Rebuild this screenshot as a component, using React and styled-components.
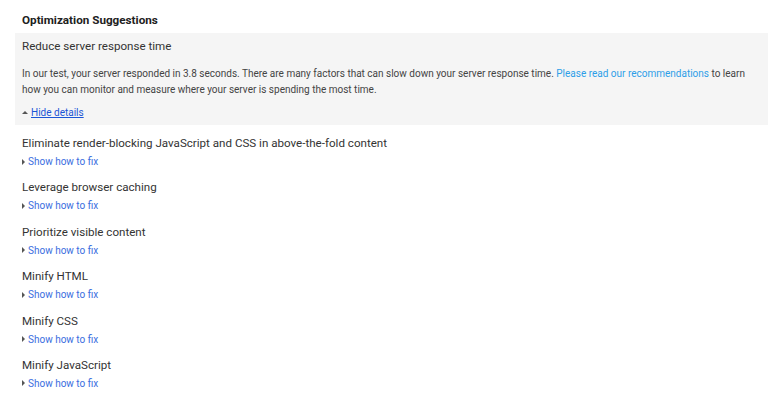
import React from 'react'
import styled, { createGlobalStyle } from 'styled-components'

const Global = createGlobalStyle`
  body {
    margin: 0;
    background: #fff;
    font-family: Roboto, "Liberation Sans", sans-serif;
    color: #333;
  }
`

const Page = styled.div`
  padding: 0 0 0 15px;
`

const Heading = styled.h2`
  margin: 0;
  padding: 12px 7px 0;
  height: 21px;
  font-size: 11.7px;
  line-height: 16px;
  font-weight: 700;
  color: #212121;
`

const Block = styled.div`
  background: ${p => (p.open ? '#f5f5f5' : 'transparent')};
  padding: ${p => (p.open ? '4px 7px 3px' : '2px 7px 3px')};
`

const RuleTitle = styled.div`
  font-size: 11.6px;
  line-height: 18px;
  color: #333;
`

const Body = styled.p`
  margin: 11px 0 5px;
  font-size: 10px;
  line-height: 16px;
  color: #444;

  a {
    color: #2d9ee8;
    text-decoration: none;
  }
`

const Toggle = styled.a`
  display: flex;
  align-items: center;
  gap: 2px;
  height: 19px;
  font-size: 10px;
  color: ${p => (p.open ? '#1c56d6' : '#3a6ee0')};
  text-decoration: ${p => (p.open ? 'underline' : 'none')};
  cursor: pointer;
`

const Arrow = styled.span`
  width: 0;
  height: 0;
  ${p =>
    p.open
      ? `border-left: 3px solid transparent;
         border-right: 3px solid transparent;
         border-bottom: 3px solid #555;`
      : `border-top: 3px solid transparent;
         border-bottom: 3px solid transparent;
         border-left: 3px solid #555;`}
  margin-right: 1px;
`

const List = styled.div`
  padding-top: 7px;
  display: flex;
  flex-direction: column;
  gap: 2.4px;
`

const rules = [
  'Eliminate render-blocking JavaScript and CSS in above-the-fold content',
  'Leverage browser caching',
  'Prioritize visible content',
  'Minify HTML',
  'Minify CSS',
  'Minify JavaScript'
]

const App = () => (
  <Page>
    <Global />
    <Heading>Optimization Suggestions</Heading>
    <Block open>
      <RuleTitle>Reduce server response time</RuleTitle>
      <Body>
        In our test, your server responded in 3.8 seconds. There are many factors that can slow down your server response time.{' '}
        <a href="#">Please read our recommendations</a> to learn how you can monitor and measure where your server is spending the most time.
      </Body>
      <Toggle open>
        <Arrow open />
        <span>Hide details</span>
      </Toggle>
    </Block>
    <List>
      {rules.map(r => (
        <Block key={r}>
          <RuleTitle>{r}</RuleTitle>
          <Toggle>
            <Arrow />
            <span>Show how to fix</span>
          </Toggle>
        </Block>
      ))}
    </List>
  </Page>
)

export default App
